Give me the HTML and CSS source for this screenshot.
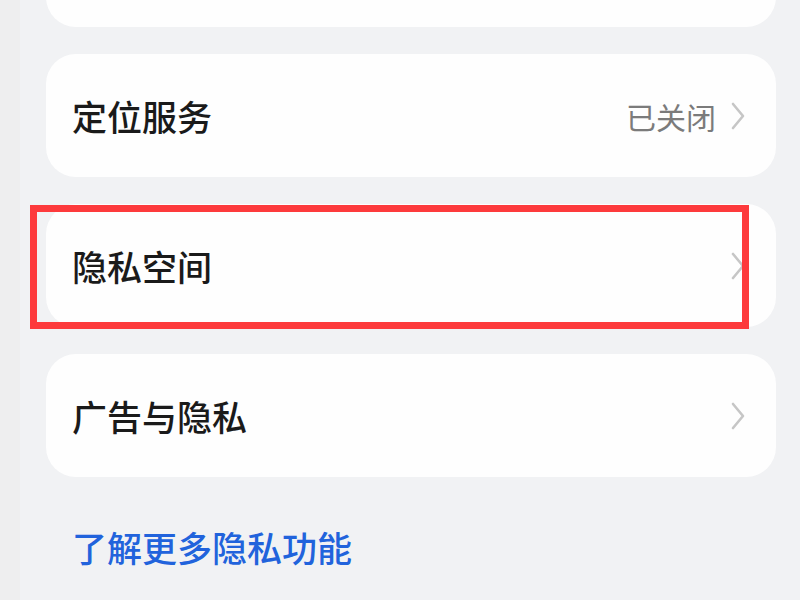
FILE: index.html
```html
<!DOCTYPE html>
<html lang="zh-CN">
<head>
<meta charset="utf-8">
<link rel="stylesheet" href="styles.css">
</head>
<body>
<div class="page">
  <div class="edge"></div>
  <main class="content">
    <div class="list">
      <div class="card"></div>
      <div class="card">
        <span class="label">定位服务</span>
        <span class="trail">
          <span class="value">已关闭</span>
          <svg class="chev" viewBox="0 0 14 28" width="14" height="28"><polyline points="2,2 12,14 2,26"/></svg>
        </span>
      </div>
      <div class="card highlighted">
        <span class="label">隐私空间</span>
        <span class="trail">
          <svg class="chev" viewBox="0 0 14 28" width="14" height="28"><polyline points="2,2 12,14 2,26"/></svg>
        </span>
        <div class="mark"></div>
      </div>
      <div class="card">
        <span class="label">广告与隐私</span>
        <span class="trail">
          <svg class="chev" viewBox="0 0 14 28" width="14" height="28"><polyline points="2,2 12,14 2,26"/></svg>
        </span>
      </div>
    </div>
    <a class="more">了解更多隐私功能</a>
  </main>
</div>
</body>
</html>
```

FILE: styles.css
```css
* { box-sizing: border-box; }
html, body {
  margin: 0;
  padding: 0;
  width: 800px;
  height: 600px;
  overflow: hidden;
  background: #f1f2f4;
  font-family: "Noto Sans CJK SC", "Noto Sans", sans-serif;
}
.page {
  display: flex;
  height: 600px;
}
.edge {
  width: 20px;
  flex: none;
  background: #eeeeef;
}
.content {
  flex: 1;
  padding: 0 24px 0 26px;
}
.list {
  margin-top: -96px;
  display: flex;
  flex-direction: column;
  gap: 27px;
}
.card {
  position: relative;
  height: 123px;
  background: #fefefe;
  border-radius: 30px;
  display: flex;
  align-items: center;
  justify-content: space-between;
  padding: 0 31px 0 26px;
}
.label {
  font-size: 35px;
  font-weight: 500;
  color: #1a1a1a;
  line-height: 1;
}
.trail {
  display: flex;
  align-items: center;
  gap: 15px;
}
.value {
  font-size: 30px;
  color: #7b7b7b;
  line-height: 1;
}
.chev {
  display: block;
  fill: none;
  stroke: #c6c6c6;
  stroke-width: 2.6;
  stroke-linecap: round;
  stroke-linejoin: round;
}
.mark {
  position: absolute;
  left: -16px;
  top: 1px;
  width: 719px;
  height: 124px;
  border: 7px solid #fd3a3c;
}
.more {
  display: block;
  margin-top: 52px;
  padding-left: 26px;
  font-size: 35px;
  font-weight: 500;
  line-height: 36px;
  color: #2163dc;
}
```
